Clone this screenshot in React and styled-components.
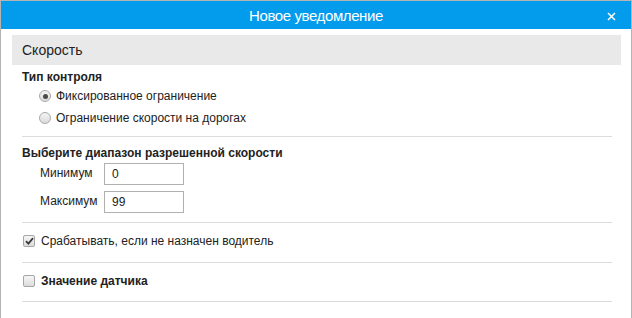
import React from 'react';
import styled, { createGlobalStyle } from 'styled-components';

const GlobalStyle = createGlobalStyle`
  html, body {
    margin: 0;
    padding: 0;
    background: #fff;
    overflow: hidden;
  }
  body {
    font-family: "Liberation Sans", Arial, sans-serif;
    color: #222;
  }
`;

const Dialog = styled.div`
  width: 632px;
  height: 330px;
  box-sizing: border-box;
  border: 1px solid #b4b4b4;
  background: #fff;
`;

const Header = styled.div`
  position: relative;
  height: 28px;
  background: #039bec;
  color: #fff;
  display: flex;
  align-items: center;
  justify-content: center;
  font-size: 15px;
  letter-spacing: -0.4px;
`;

const CloseButton = styled.button`
  position: absolute;
  right: 15px;
  top: 11px;
  width: 9px;
  height: 9px;
  padding: 0;
  border: 0;
  background: transparent;
  cursor: pointer;
  display: flex;
`;

const Body = styled.div`
  padding: 6px 10px 0 11px;
`;

const SectionBar = styled.div`
  height: 30px;
  background: #e9e9e9;
  display: flex;
  align-items: center;
  padding-left: 10px;
  font-size: 14px;
  color: #222;
`;

const Content = styled.div`
  padding: 0 9px 0 10px;
`;

const Group = styled.div`
  border-bottom: 1px solid #dcdcdc;
  padding: ${p => p.$pad};
`;

const Heading = styled.div`
  font-size: 12px;
  font-weight: bold;
  line-height: 16px;
  color: #222;
`;

const Option = styled.label`
  display: flex;
  align-items: center;
  height: 22px;
  padding-left: 17px;
  font-size: 12px;
  color: #222;
  cursor: pointer;
`;

const Radio = styled.span`
  width: 12px;
  height: 12px;
  box-sizing: border-box;
  border-radius: 50%;
  border: 1px solid #a8a8a8;
  background: linear-gradient(#f4f4f4, #dcdcdc);
  margin-right: 5px;
  display: flex;
  align-items: center;
  justify-content: center;
  &::after {
    content: '';
    width: 5px;
    height: 5px;
    border-radius: 50%;
    background: ${p => (p.$checked ? '#4a4a4a' : 'transparent')};
  }
`;

const CheckRow = styled.label`
  display: flex;
  align-items: center;
  height: 20px;
  font-size: 12px;
  font-weight: ${p => (p.$bold ? 'bold' : 'normal')};
  color: #222;
  cursor: pointer;
`;

const Checkbox = styled.span`
  width: 12px;
  height: 12px;
  box-sizing: border-box;
  border: 1px solid #a5a5a5;
  border-radius: 2px;
  background: linear-gradient(#f6f6f6, #dcdcdc);
  margin: 0 6px 0 1px;
  display: flex;
  align-items: center;
  justify-content: center;
`;

const Field = styled.div`
  display: flex;
  align-items: center;
  padding-left: 18px;
  margin-top: ${p => p.$top}px;
`;

const FieldLabel = styled.span`
  width: 64px;
  font-size: 12px;
  color: #222;
  margin-top: -3px;
`;

const Input = styled.input`
  width: 80px;
  height: 22px;
  box-sizing: border-box;
  border: 1px solid #b0b0b0;
  padding: 0 7px;
  font-family: "Liberation Sans", Arial, sans-serif;
  font-size: 12px;
  color: #222;
  outline: none;
`;

function App() {
  return (
    <>
      <GlobalStyle />
      <Dialog>
        <Header>
          Новое уведомление
          <CloseButton aria-label="Закрыть">
            <svg width="9" height="9" viewBox="0 0 9 9">
              <path d="M1 1L8 8M8 1L1 8" stroke="#fff" strokeWidth="1.5" />
            </svg>
          </CloseButton>
        </Header>
        <Body>
          <SectionBar>Скорость</SectionBar>
          <Content>
            <Group $pad="4px 0 7px">
              <Heading>Тип контроля</Heading>
              <Option>
                <Radio $checked />
                Фиксированное ограничение
              </Option>
              <Option>
                <Radio />
                Ограничение скорости на дорогах
              </Option>
            </Group>
            <Group $pad="8px 0 9px">
              <Heading>Выберите диапазон разрешенной скорости</Heading>
              <Field $top={2}>
                <FieldLabel>Минимум</FieldLabel>
                <Input defaultValue="0" />
              </Field>
              <Field $top={6}>
                <FieldLabel>Максимум</FieldLabel>
                <Input defaultValue="99" />
              </Field>
            </Group>
            <Group $pad="8px 0 11px">
              <CheckRow>
                <Checkbox>
                  <svg width="9" height="8" viewBox="0 0 9 8">
                    <path d="M1 4.2L3.4 6.6L8 1.2" fill="none" stroke="#3a3a3a" strokeWidth="1.8" />
                  </svg>
                </Checkbox>
                Срабатывать, если не назначен водитель
              </CheckRow>
            </Group>
            <Group $pad="8px 0 10px">
              <CheckRow $bold>
                <Checkbox />
                Значение датчика
              </CheckRow>
            </Group>
          </Content>
        </Body>
      </Dialog>
    </>
  );
}

export default App;
